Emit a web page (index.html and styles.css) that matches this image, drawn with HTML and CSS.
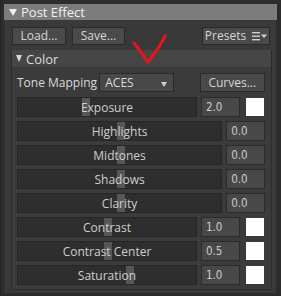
FILE: index.html
```html
<!DOCTYPE html>
<html>
<head>
<meta charset="utf-8">
<link rel="stylesheet" href="styles.css">
</head>
<body>
<div class="frame">
  <div class="panel">
    <div class="panel-head"><span class="tri"></span>Post Effect</div>
    <div class="panel-body">
      <div class="toolbar">
        <button class="btn load">Load...</button>
        <button class="btn save">Save...</button>
        <button class="btn presets">Presets
          <svg class="menu-ico" width="15" height="9" viewBox="0 0 15 9"><rect x="0" y="0" width="8" height="1.4" fill="#d0d0d0"/><rect x="0" y="3.5" width="8" height="1.4" fill="#d0d0d0"/><rect x="0" y="7" width="8" height="1.4" fill="#d0d0d0"/><path d="M9 2.5 L15 2.5 L12 6 Z" fill="#d0d0d0"/></svg>
        </button>
      </div>
      <div class="section">
        <div class="section-head"><span class="tri small"></span>Color</div>
        <div class="section-body">
          <div class="tone-row">
            <span class="label">Tone Mapping</span>
            <div class="dropdown">ACES<span class="caret"></span></div>
            <button class="btn curves">Curves...</button>
          </div>
          <div class="prop with-swatch">
            <div class="slider"><span class="handle" style="left:64px"></span><span class="slabel">Exposure</span></div>
            <div class="value">2.0</div>
            <div class="swatch"></div>
          </div>
          <div class="prop">
            <div class="slider"><span class="handle" style="left:99px"></span><span class="slabel">Highlights</span></div>
            <div class="value">0.0</div>
          </div>
          <div class="prop">
            <div class="slider"><span class="handle" style="left:99px"></span><span class="slabel">Midtones</span></div>
            <div class="value">0.0</div>
          </div>
          <div class="prop">
            <div class="slider"><span class="handle" style="left:99px"></span><span class="slabel">Shadows</span></div>
            <div class="value">0.0</div>
          </div>
          <div class="prop">
            <div class="slider"><span class="handle" style="left:99px"></span><span class="slabel">Clarity</span></div>
            <div class="value">0.0</div>
          </div>
          <div class="prop with-swatch">
            <div class="slider"><span class="handle" style="left:86px"></span><span class="slabel">Contrast</span></div>
            <div class="value">1.0</div>
            <div class="swatch"></div>
          </div>
          <div class="prop with-swatch">
            <div class="slider"><span class="handle" style="left:86px"></span><span class="slabel">Contrast Center</span></div>
            <div class="value">0.5</div>
            <div class="swatch"></div>
          </div>
          <div class="prop with-swatch">
            <div class="slider"><span class="handle" style="left:108px"></span><span class="slabel">Saturation</span></div>
            <div class="value">1.0</div>
            <div class="swatch"></div>
          </div>
        </div>
      </div>
    </div>
  </div>
  <svg class="annot" width="281" height="296" viewBox="0 0 281 296">
    <path d="M164 36 C161 44 153 54 147 62" stroke="#e8141c" stroke-width="3" fill="none" stroke-linecap="round"/>
    <path d="M133 43 C138 49 143 57 147 62" stroke="#e8141c" stroke-width="3" fill="none" stroke-linecap="round"/>
  </svg>
</div>
</body>
</html>
```
FILE: styles.css
```css
* { box-sizing: border-box; }
html, body { margin: 0; padding: 0; }
body {
  width: 281px;
  height: 296px;
  background: #2c2c2c;
  font-family: "Open Sans", "Noto Sans", sans-serif;
  font-size: 12px;
  color: #d6d6d6;
  overflow: hidden;
}
.frame {
  position: relative;
  width: 281px;
  height: 296px;
  padding: 4px 4px 0 4px;
  border-left: 1px solid #242424;
}
.panel {
  width: 273px;
  margin-left: -1px;
}
.panel-head {
  height: 16px;
  background: #7c7c7c;
  color: #f0f0f0;
  font-size: 13px;
  line-height: 16px;
  display: flex;
  align-items: center;
  padding-left: 5px;
}
.tri {
  width: 0; height: 0;
  border-left: 4px solid transparent;
  border-right: 4px solid transparent;
  border-top: 7px solid #f0f0f0;
  margin-right: 4px;
}
.tri.small {
  border-left-width: 3.5px;
  border-right-width: 3.5px;
  border-top: 7px solid #d8d8d8;
  margin-right: 4px;
}
.panel-body {
  background: #393939;
  padding: 7px 6px 4px 6px;
  height: 273px;
  border-left: 1px solid #333;
  border-right: 1px solid #2a2a2a;
}
.toolbar {
  display: flex;
  gap: 6px;
  height: 18px;
  padding-left: 1px;
}
.btn {
  font-family: inherit;
  font-size: 12px;
  color: #d6d6d6;
  background: #4a4a4a;
  border: 1px solid #2a2a2a;
  padding: 0;
  height: 18px;
  line-height: 16px;
  display: flex;
  align-items: center;
  justify-content: center;
}
.load { width: 54px; }
.save { width: 53px; }
.presets { width: 68px; margin-left: auto; gap: 6px; }
.menu-ico { display: block; }
.section {
  margin-top: 5px;
  border: 1px solid #2c2c2c;
  border-top: none;
  margin-right: -2px;
}
.section-head {
  height: 17px;
  background: #464646;
  display: flex;
  align-items: center;
  padding-left: 4px;
  font-size: 13px;
  color: #dcdcdc;
}
.section-body {
  background: #3b3b3b;
  padding: 6px 6px 4px 5px;
  display: flex;
  flex-direction: column;
  gap: 4px;
  height: 222px;
}
.tone-row {
  display: flex;
  align-items: center;
  height: 19px;
  margin-bottom: 1px;
}
.label { width: 83px; color: #dadada; }
.dropdown {
  width: 75px;
  height: 19px;
  background: #484848;
  border: 1px solid #2a2a2a;
  display: flex;
  align-items: center;
  padding-left: 5px;
  position: relative;
  color: #dadada;
}
.caret {
  position: absolute;
  right: 6px;
  top: 8px;
  width: 0; height: 0;
  border-left: 3.5px solid transparent;
  border-right: 3.5px solid transparent;
  border-top: 5px solid #cfcfcf;
}
.curves { width: 66px; height: 19px; margin-left: 26px; }
.prop {
  display: flex;
  align-items: center;
  gap: 4px;
  height: 20px;
}
.slider {
  position: relative;
  width: 206px;
  height: 20px;
  background: #2e2e2e;
  border: 1px solid #262626;
  display: flex;
  align-items: center;
  justify-content: center;
  color: #cfcfcf;
}
.with-swatch .slider { width: 180px; }
.handle {
  position: absolute;
  top: 0;
  bottom: 0;
  width: 8px;
  background: #575757;
}
.slabel { position: relative; }
.value {
  width: 39px;
  height: 20px;
  background: #484848;
  border: 1px solid #2c2c2c;
  padding-left: 4px;
  line-height: 18px;
  color: #cfcfcf;
  font-family: "DejaVu Sans", sans-serif;
  font-stretch: condensed;
  font-size: 11.5px;
}
.swatch {
  width: 18px;
  height: 18px;
  background: #ffffff;
  margin-left: 2px;
}
.annot {
  position: absolute;
  left: 0;
  top: 0;
  pointer-events: none;
}
```
